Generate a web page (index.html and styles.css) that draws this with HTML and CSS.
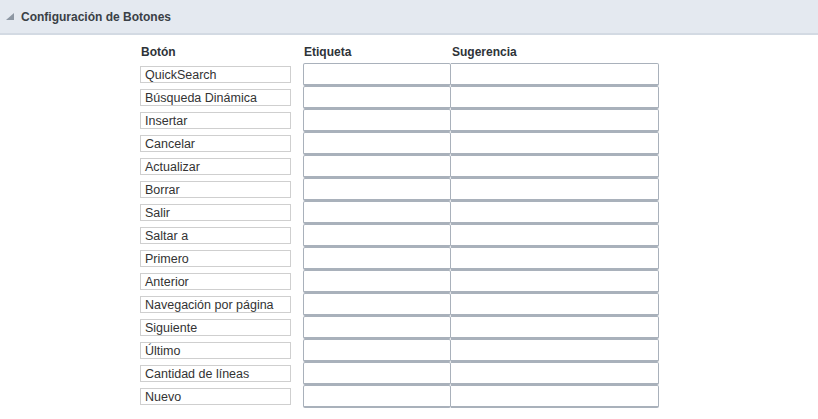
FILE: index.html
```html
<!DOCTYPE html>
<html lang="es">
<head>
  <meta charset="UTF-8" />
  <title>Configuración de Botones</title>
  <link rel="stylesheet" href="styles.css">
</head>
<body>
  <div class="panel-header">
    <span class="toggle"></span>
    <h2>Configuración de Botones</h2>
  </div>

  <div class="buttons-table">
    <div class="col-head">Botón</div>
    <div class="col-head">Etiqueta</div>
    <div class="col-head">Sugerencia</div>

    <div class="name-cell"><span class="name-box">QuickSearch</span></div>
    <input type="text" class="label-input" /><input type="text" class="hint-input" />

    <div class="name-cell"><span class="name-box">Búsqueda Dinámica</span></div>
    <input type="text" class="label-input" /><input type="text" class="hint-input" />

    <div class="name-cell"><span class="name-box">Insertar</span></div>
    <input type="text" class="label-input" /><input type="text" class="hint-input" />

    <div class="name-cell"><span class="name-box">Cancelar</span></div>
    <input type="text" class="label-input" /><input type="text" class="hint-input" />

    <div class="name-cell"><span class="name-box">Actualizar</span></div>
    <input type="text" class="label-input" /><input type="text" class="hint-input" />

    <div class="name-cell"><span class="name-box">Borrar</span></div>
    <input type="text" class="label-input" /><input type="text" class="hint-input" />

    <div class="name-cell"><span class="name-box">Salir</span></div>
    <input type="text" class="label-input" /><input type="text" class="hint-input" />

    <div class="name-cell"><span class="name-box">Saltar a</span></div>
    <input type="text" class="label-input" /><input type="text" class="hint-input" />

    <div class="name-cell"><span class="name-box">Primero</span></div>
    <input type="text" class="label-input" /><input type="text" class="hint-input" />

    <div class="name-cell"><span class="name-box">Anterior</span></div>
    <input type="text" class="label-input" /><input type="text" class="hint-input" />

    <div class="name-cell"><span class="name-box">Navegación por página</span></div>
    <input type="text" class="label-input" /><input type="text" class="hint-input" />

    <div class="name-cell"><span class="name-box">Siguiente</span></div>
    <input type="text" class="label-input" /><input type="text" class="hint-input" />

    <div class="name-cell"><span class="name-box">Último</span></div>
    <input type="text" class="label-input" /><input type="text" class="hint-input" />

    <div class="name-cell"><span class="name-box">Cantidad de líneas</span></div>
    <input type="text" class="label-input" /><input type="text" class="hint-input" />

    <div class="name-cell"><span class="name-box">Nuevo</span></div>
    <input type="text" class="label-input" /><input type="text" class="hint-input" />
  </div>
</body>
</html>
```

FILE: styles.css
```css
body {
  font-family: 'Liberation Sans', Arial, sans-serif;
  font-size: 12px;
  color: #333;
  background: #fff;
  margin: 0;
  padding: 0;
}
.panel-header {
  display: flex;
  align-items: center;
  height: 33px;
  background: #e4e9f0;
  border-bottom: 2px solid #d3dae3;
  padding-left: 6px;
}
.toggle {
  width: 0;
  height: 0;
  border-left: 8px solid transparent;
  border-bottom: 7px solid #8d97a3;
  margin-right: 7px;
  margin-top: 0;
}
.panel-header h2 {
  margin: 0;
  font-size: 12px;
  font-weight: bold;
  color: #3a3f46;
}
.buttons-table {
  display: grid;
  grid-template-columns: 163px 148px 208px;
  margin: 10px 0 0 140px;
  width: 519px;
}
.col-head {
  font-weight: bold;
  font-size: 12px;
  line-height: 14px;
  color: #2e3338;
  padding-left: 1px;
  height: 18px;
}
.name-cell {
  height: 23px;
  display: flex;
  align-items: center;
}
.name-box {
  display: block;
  box-sizing: border-box;
  width: 151px;
  height: 17px;
  line-height: 13px;
  padding-top: 2px;
  border: 1px solid #cfcfcf;
  padding-left: 4px;
  font-size: 12.5px;
  color: #333;
  white-space: nowrap;
  overflow: hidden;
}
.label-input, .hint-input {
  box-sizing: border-box;
  height: 23px;
  margin: 0;
  border: 1px solid #a9b1bb;
  border-bottom-width: 2px;
  border-radius: 2px;
  background: #fff;
  font-family: inherit;
  font-size: 12px;
  padding: 0 4px;
  width: 100%;
}
.hint-input {
  border-left: none;
  border-radius: 0 2px 2px 0;
}
```
